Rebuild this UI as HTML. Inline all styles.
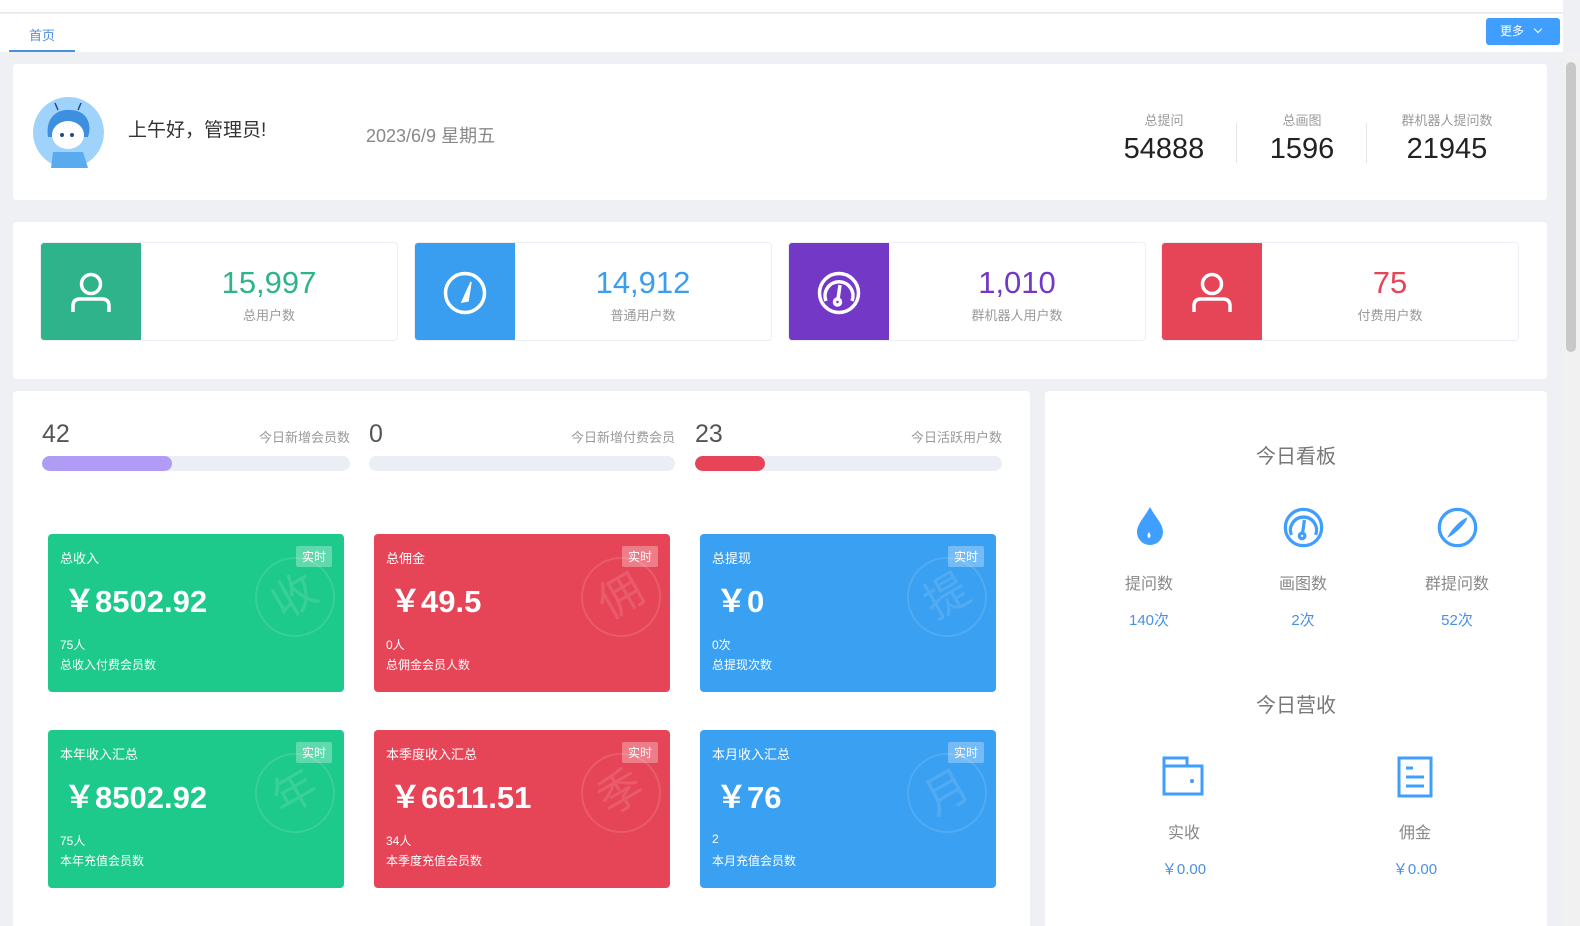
<!DOCTYPE html>
<html style="overflow:hidden"><head><meta charset="utf-8"><style>
*{margin:0;padding:0;box-sizing:border-box}
html,body{overflow:hidden}
body{width:1580px;height:926px;background:#eef0f4;font-family:"Liberation Sans","Noto Sans CJK SC",sans-serif;position:relative}
.a{position:absolute}
.card{position:absolute;background:#fff;border-radius:4px}
.stat{position:absolute;top:242px;width:358px;height:99px;border:1px solid #ebeef5;border-radius:4px;background:#fff;overflow:hidden}
.stat .ic{position:absolute;left:0;top:0;width:100px;height:99px;display:flex;align-items:center;justify-content:center}
.stat .n{position:absolute;left:100px;right:0;top:22px;text-align:center;font-size:31px}
.stat .l{position:absolute;left:100px;right:0;top:62px;text-align:center;font-size:13px;color:#999}
.cc{position:absolute;width:296px;height:158px;border-radius:4px;color:#fff;overflow:hidden}
.cc .t{position:absolute;left:12px;top:14px;font-size:13px}
.cc .tag{position:absolute;right:12px;top:12px;background:rgba(255,255,255,.3);font-size:12px;padding:2px 6px;border-radius:2px}
.cc .v{position:absolute;left:16px;top:42px;font-size:31px;font-weight:bold}
.cc .p{position:absolute;left:12px;top:102px;font-size:12px}
.cc .d{position:absolute;left:12px;top:122px;font-size:12px}
.cc .w{position:absolute;left:207px;top:23px;width:80px;height:80px;border:2px solid rgba(255,255,255,.12);border-radius:50%;font-size:44px;color:rgba(255,255,255,.12);text-align:center;line-height:76px;transform:rotate(-30deg)}
.pg{position:absolute;top:456px;height:15px;border-radius:8px;background:#ebeef5;overflow:hidden}
.pg i{position:absolute;left:0;top:0;bottom:0;border-radius:8px}
.tc{position:absolute;text-align:center;width:120px}
</style></head><body>
<div class="a" style="left:0;top:0;width:1563px;height:13px;background:#fff;border-bottom:1px solid #e8e8e8"></div>
<div class="a" style="left:0;top:14px;width:1563px;height:38px;background:#fff"></div>
<div class="a" style="left:9px;top:25px;width:66px;text-align:center;font-size:13px;color:#4a90e2">首页</div>
<div class="a" style="left:9px;top:50px;width:66px;height:2px;background:#4a90e2"></div>
<div class="a" style="left:1486px;top:18px;width:74px;height:27px;background:#409eff;border-radius:3px;color:#fff;font-size:12px;line-height:27px;padding-left:14px">更多 <span style="display:inline-block;width:6px;height:6px;border-right:1px solid #fff;border-bottom:1px solid #fff;transform:rotate(45deg);margin-left:8px;position:relative;top:-3px"></span></div>
<div class="a" style="left:1563px;top:52px;width:17px;height:874px;background:#f1f1f1"></div>
<div class="a" style="left:1566px;top:62px;width:10px;height:290px;background:#c8c8c8;border-radius:5px"></div>

<div class="card" style="left:13px;top:64px;width:1534px;height:136px"></div>
<svg class="a" style="left:33px;top:97px" width="71" height="71" viewBox="0 0 71 71"><circle cx="35.5" cy="35.5" r="35.5" fill="#9fd3fb"/><path d="M15 40 C12 20 25 12 37 13 C52 13 60 25 55 40 Z" fill="#3d8fe0"/><ellipse cx="35" cy="38" rx="16" ry="14" fill="#fff"/><circle cx="29" cy="38" r="2" fill="#1e4a8a"/><circle cx="39" cy="38" r="2" fill="#1e4a8a"/><path d="M18 71 L20 55 L50 55 L55 71 Z" fill="#5aaaf0"/><path d="M25 13 L22 6 M45 13 L48 6" stroke="#1e4a8a" stroke-width="1.5"/></svg>
<div class="a" style="left:128px;top:115px;font-size:19px;color:#333">上午好，管理员!</div>
<div class="a" style="left:366px;top:122px;font-size:18px;color:#888">2023/6/9 星期五</div>
<div class="tc" style="left:1104px;top:110px;font-size:13px;color:#999">总提问</div>
<div class="tc" style="left:1104px;top:133px;font-size:29px;color:#222">54888</div>
<div class="a" style="left:1236px;top:123px;width:1px;height:40px;background:#e5e5e5"></div>
<div class="tc" style="left:1242px;top:110px;font-size:13px;color:#999">总画图</div>
<div class="tc" style="left:1242px;top:133px;font-size:29px;color:#222">1596</div>
<div class="a" style="left:1366px;top:123px;width:1px;height:40px;background:#e5e5e5"></div>
<div class="tc" style="left:1387px;top:110px;font-size:13px;color:#999">群机器人提问数</div>
<div class="tc" style="left:1387px;top:133px;font-size:29px;color:#222">21945</div>

<div class="card" style="left:13px;top:222px;width:1534px;height:157px"></div>
<div class="stat" style="left:40px"><div class="ic" style="background:#2fb38b"><svg width="40" height="42" viewBox="0 0 40 42" fill="none" stroke="#fff" stroke-width="3.5"><circle cx="20" cy="12" r="9.5"/><path d="M2 40 V34 Q2 27 9 27 H31 Q38 27 38 34 V40"/></svg></div><div class="n" style="color:#2fb38b">15,997</div><div class="l">总用户数</div></div>
<div class="stat" style="left:414px"><div class="ic" style="background:#3a9ef0"><svg width="44" height="44" viewBox="0 0 44 44" fill="none" stroke="#fff" stroke-width="3.5"><circle cx="22" cy="22" r="19.5"/><path d="M28 11 L19 31 L25 30 Z" fill="#fff" stroke-width="1.5"/></svg></div><div class="n" style="color:#3a9ef0">14,912</div><div class="l">普通用户数</div></div>
<div class="stat" style="left:788px"><div class="ic" style="background:#7438c6"><svg width="44" height="44" viewBox="0 0 44 44" fill="none" stroke="#fff" stroke-width="3.5"><circle cx="22" cy="22" r="19.5"/><path d="M9 30 A14 14 0 1 1 35 30"/><path d="M23 14 L21 28"/><circle cx="20.5" cy="31" r="3"/></svg></div><div class="n" style="color:#7438c6">1,010</div><div class="l">群机器人用户数</div></div>
<div class="stat" style="left:1161px"><div class="ic" style="background:#e64557"><svg width="40" height="42" viewBox="0 0 40 42" fill="none" stroke="#fff" stroke-width="3.5"><circle cx="20" cy="12" r="9.5"/><path d="M2 40 V34 Q2 27 9 27 H31 Q38 27 38 34 V40"/></svg></div><div class="n" style="color:#e64557">75</div><div class="l">付费用户数</div></div>

<div class="card" style="left:13px;top:391px;width:1017px;height:535px;border-radius:4px 4px 0 0"></div>
<div class="a" style="left:42px;top:420px;font-size:25px;color:#555">42</div>
<div class="a" style="left:200px;top:427px;width:150px;text-align:right;font-size:13px;color:#999">今日新增会员数</div>
<div class="pg" style="left:42px;width:308px"><i style="width:130px;background:#b19cf5"></i></div>
<div class="a" style="left:369px;top:420px;font-size:25px;color:#555">0</div>
<div class="a" style="left:525px;top:427px;width:150px;text-align:right;font-size:13px;color:#999">今日新增付费会员</div>
<div class="pg" style="left:369px;width:306px"></div>
<div class="a" style="left:695px;top:420px;font-size:25px;color:#555">23</div>
<div class="a" style="left:852px;top:427px;width:150px;text-align:right;font-size:13px;color:#999">今日活跃用户数</div>
<div class="pg" style="left:695px;width:307px"><i style="width:70px;background:#e64557"></i></div>

<div class="cc" style="left:48px;top:534px;background:#1dc98b"><div class="t">总收入</div><div class="tag">实时</div><div class="v">￥8502.92</div><div class="p">75人</div><div class="d">总收入付费会员数</div><div class="w">收</div></div>
<div class="cc" style="left:374px;top:534px;background:#e64557"><div class="t">总佣金</div><div class="tag">实时</div><div class="v">￥49.5</div><div class="p">0人</div><div class="d">总佣金会员人数</div><div class="w">佣</div></div>
<div class="cc" style="left:700px;top:534px;background:#3aa0f2"><div class="t">总提现</div><div class="tag">实时</div><div class="v">￥0</div><div class="p">0次</div><div class="d">总提现次数</div><div class="w">提</div></div>
<div class="cc" style="left:48px;top:730px;background:#1dc98b"><div class="t">本年收入汇总</div><div class="tag">实时</div><div class="v">￥8502.92</div><div class="p">75人</div><div class="d">本年充值会员数</div><div class="w">年</div></div>
<div class="cc" style="left:374px;top:730px;background:#e64557"><div class="t">本季度收入汇总</div><div class="tag">实时</div><div class="v">￥6611.51</div><div class="p">34人</div><div class="d">本季度充值会员数</div><div class="w">季</div></div>
<div class="cc" style="left:700px;top:730px;background:#3aa0f2"><div class="t">本月收入汇总</div><div class="tag">实时</div><div class="v">￥76</div><div class="p">2</div><div class="d">本月充值会员数</div><div class="w">月</div></div>

<div class="card" style="left:1045px;top:391px;width:502px;height:535px;border-radius:4px 4px 0 0"></div>
<div class="a" style="left:1045px;width:502px;top:440px;text-align:center;font-size:20px;color:#777">今日看板</div>
<svg class="a" style="left:1135px;top:506px" width="30" height="40" viewBox="0 0 30 40"><path d="M15 1 C9 12 2 18 2 26 A13 13 0 0 0 28 26 C28 18 21 12 15 1 Z" fill="#409eff"/><path d="M14 26 C12 29 12 31 14 32 C16 31 16 29 14 26Z" fill="#fff"/></svg>
<svg class="a" style="left:1283px;top:507px" width="41" height="41" viewBox="0 0 44 44" fill="none" stroke="#409eff" stroke-width="3.5"><circle cx="22" cy="22" r="19.5"/><path d="M9 30 A14 14 0 1 1 35 30"/><path d="M23 14 L21 28"/><circle cx="20.5" cy="31" r="3"/></svg>
<svg class="a" style="left:1437px;top:507px" width="41" height="41" viewBox="0 0 44 44" fill="none" stroke="#409eff" stroke-width="3.5"><circle cx="22" cy="22" r="19.5"/><path d="M32 12 C26 14 16 24 12 32 C20 28 30 18 32 12Z" fill="#409eff" stroke-width="1"/></svg>
<div class="tc" style="left:1089px;top:570px;font-size:16px;color:#888">提问数</div>
<div class="tc" style="left:1089px;top:609px;font-size:15px;color:#4a90e2">140次</div>
<div class="tc" style="left:1243px;top:570px;font-size:16px;color:#888">画图数</div>
<div class="tc" style="left:1243px;top:609px;font-size:15px;color:#4a90e2">2次</div>
<div class="tc" style="left:1397px;top:570px;font-size:16px;color:#888">群提问数</div>
<div class="tc" style="left:1397px;top:609px;font-size:15px;color:#4a90e2">52次</div>
<div class="a" style="left:1045px;width:502px;top:689px;text-align:center;font-size:20px;color:#777">今日营收</div>
<svg class="a" style="left:1162px;top:756px" width="42" height="40" viewBox="0 0 42 40" fill="none" stroke="#409eff" stroke-width="3"><path d="M2 2 H25 V10 H40 V38 H2 Z M2 10 H25"/><circle cx="30" cy="25" r="2" fill="#409eff" stroke="none"/></svg>
<svg class="a" style="left:1397px;top:756px" width="36" height="42" viewBox="0 0 36 42" fill="none" stroke="#409eff" stroke-width="3"><rect x="2" y="2" width="32" height="38"/><path d="M9 12 H16 M9 21 H27 M9 30 H27"/></svg>
<div class="tc" style="left:1124px;top:819px;font-size:16px;color:#888">实收</div>
<div class="tc" style="left:1124px;top:858px;font-size:15px;color:#4a90e2">￥0.00</div>
<div class="tc" style="left:1355px;top:819px;font-size:16px;color:#888">佣金</div>
<div class="tc" style="left:1355px;top:858px;font-size:15px;color:#4a90e2">￥0.00</div>
</body></html>
